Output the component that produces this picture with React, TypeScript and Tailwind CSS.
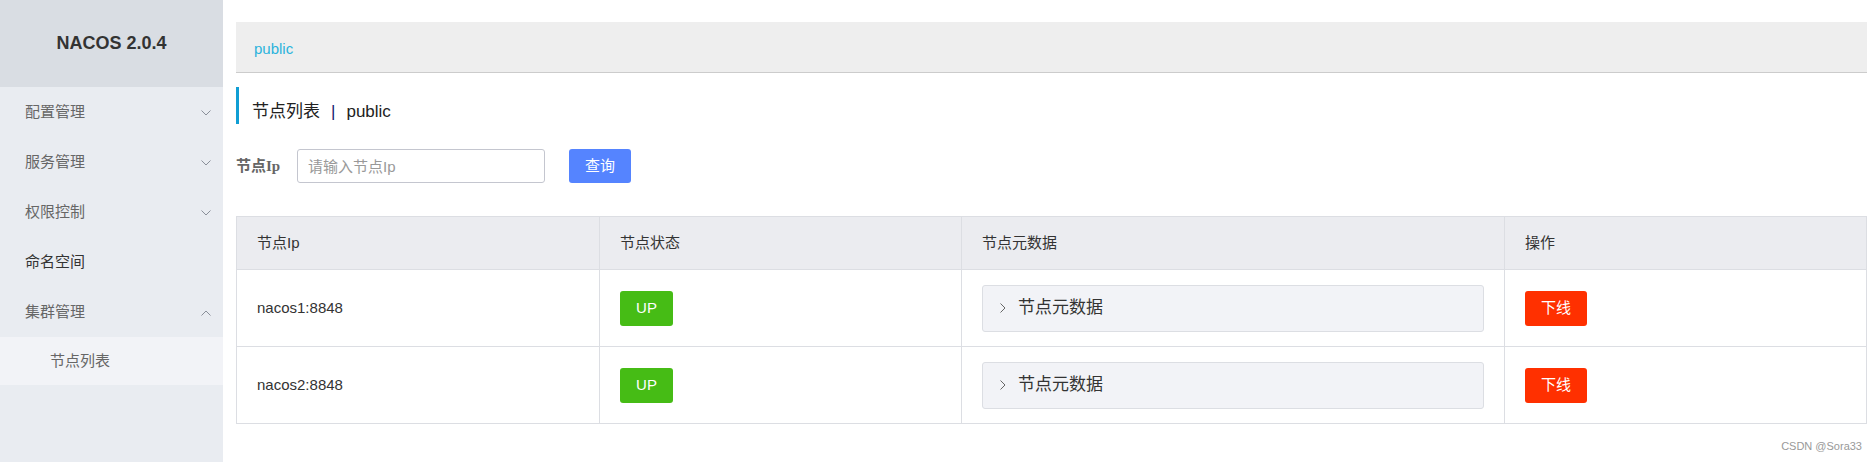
const SANS = "font-['Liberation_Sans','Noto_Sans_CJK_SC',sans-serif]"

const MENU = [
  { label: '配置管理', arrow: 'down' },
  { label: '服务管理', arrow: 'down' },
  { label: '权限控制', arrow: 'down' },
  { label: '命名空间', arrow: null },
  { label: '集群管理', arrow: 'up' },
]

const NODES = ['nacos1:8848', 'nacos2:8848']

function Chevron({ dir }: { dir: 'down' | 'up' }) {
  return (
    <svg width="10" height="6" viewBox="0 0 10 6" fill="none">
      <polyline
        points={dir === 'down' ? '0.5,0.5 5,5 9.5,0.5' : '0.5,5.5 5,1 9.5,5.5'}
        stroke="#8a8f99"
        strokeWidth="1"
      />
    </svg>
  )
}

function Sidebar() {
  return (
    <div className="flex w-[223px] shrink-0 flex-col bg-[#e9ecf1]">
      <div className="flex h-[87px] items-center justify-center bg-[#d9dde3] text-[18px] font-bold text-[#333]">
        NACOS 2.0.4
      </div>
      {MENU.map((m) => (
        <div
          key={m.label}
          className={`flex h-[50px] items-center justify-between pl-[25px] pr-[12px] pt-[1px] text-[15px] ${
            m.arrow ? 'text-[#666]' : 'text-[#333]'
          }`}
        >
          <span>{m.label}</span>
          {m.arrow && <Chevron dir={m.arrow as 'down' | 'up'} />}
        </div>
      ))}
      <div className="flex h-[48px] items-center bg-[#f2f3f7] pl-[50px] text-[15px] text-[#666]">
        节点列表
      </div>
    </div>
  )
}

function NodeTable() {
  const cell = 'flex items-center border-l border-[#dcdee3] pl-[20px] first:border-l-0'
  return (
    <div className="mt-[33px] border border-[#dcdee3] text-[15px] text-[#333]">
      <div className="grid h-[52px] grid-cols-[2fr_2fr_3fr_2fr] bg-[#ebecf0]">
        <div className={cell}>节点Ip</div>
        <div className={cell}>节点状态</div>
        <div className={cell}>节点元数据</div>
        <div className={cell}>操作</div>
      </div>
      {NODES.map((n) => (
        <div
          key={n}
          className="grid h-[77px] grid-cols-[2fr_2fr_3fr_2fr] border-t border-[#dcdee3]"
        >
          <div className={cell}>{n}</div>
          <div className={cell}>
            <span className="flex h-[35px] w-[53px] items-center justify-center rounded-[3px] bg-[#46bc15] text-white">
              UP
            </span>
          </div>
          <div className={`${cell} pr-[20px]`}>
            <div className="flex h-[47px] w-full items-center rounded-[3px] border border-[#dcdee3] bg-[#f2f3f7] pl-[17px]">
              <svg width="6" height="10" viewBox="0 0 6 10" fill="none">
                <polyline points="0.5,0.5 5,5 0.5,9.5" stroke="#666" strokeWidth="1" />
              </svg>
              <span className="ml-[12px] text-[17px] text-[#333]">节点元数据</span>
            </div>
          </div>
          <div className={cell}>
            <button className="flex h-[35px] w-[62px] items-center justify-center rounded-[3px] bg-[#ff3000] text-white">
              下线
            </button>
          </div>
        </div>
      ))}
    </div>
  )
}

export default function App() {
  return (
    <div className={`flex min-h-screen bg-white ${SANS}`}>
      <Sidebar />
      <div className="flex-1 pl-[13px] pr-[9px] pt-[22px]">
        <div className="flex h-[51px] items-center border-b border-[#cccccc] bg-[#eeeeee] pl-[18px] pt-[5px] text-[15px] text-[#2bb3dc]">
          public
        </div>
        <div className="mt-[14px] h-[37px] border-l-[3px] border-[#109ed4] pl-[13px] pt-[16px] text-[17px] leading-[17px] text-[#222]">
          节点列表<span className="mx-[11px] text-[#131a6e]">|</span>public
        </div>
        <div className="mt-[25px] flex h-[34px] items-center">
          <label className="w-[46px] font-['Liberation_Serif','Noto_Sans_CJK_SC',serif] text-[15px] font-bold text-[#666]">
            节点Ip
          </label>
          <input
            placeholder="请输入节点Ip"
            className="ml-[15px] h-[34px] w-[248px] rounded-[3px] border border-[#c4c6cf] px-[10px] text-[15px] text-[#333] placeholder:text-[#999] focus:outline-none"
          />
          <button className="ml-[24px] h-[34px] w-[62px] rounded-[3px] bg-[#5584ff] text-[15px] text-white">
            查询
          </button>
        </div>
        <NodeTable />
        <div className="mt-[16px] pr-[5px] text-right text-[11px] leading-[12px] text-[#999]">
          CSDN @Sora33
        </div>
      </div>
    </div>
  )
}
